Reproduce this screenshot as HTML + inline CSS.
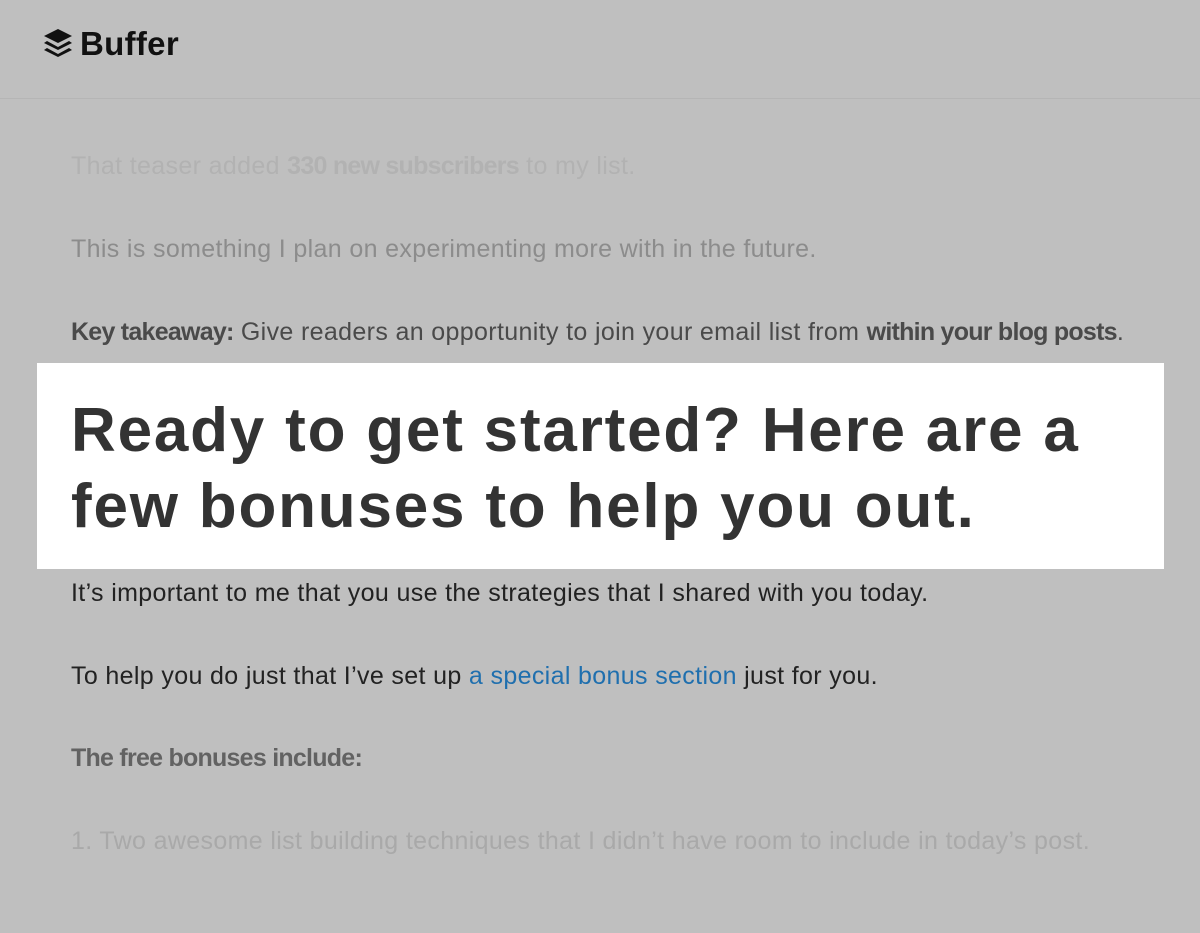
<!DOCTYPE html>
<html><head><meta charset="utf-8"><style>
html,body{margin:0;padding:0;}
body{width:1200px;height:933px;background:#bfbfbf;position:relative;overflow:hidden;font-family:"Liberation Sans",sans-serif;}
.hdr{position:absolute;left:0;top:0;width:1200px;height:98px;border-bottom:1px solid #b5b5b5;}
.logo{position:absolute;left:43px;top:28px;}
.brand{position:absolute;left:80px;top:25px;font-weight:bold;font-size:33px;color:#111;letter-spacing:0.3px;}
.l{position:absolute;left:71px;font-size:25px;line-height:30px;white-space:nowrap;letter-spacing:0.35px;}
.l b{letter-spacing:-0.75px;}
.box{position:absolute;left:37px;top:363px;width:1127px;height:206px;background:#fff;}
.h{position:absolute;left:34px;top:30px;font-weight:bold;font-size:62px;line-height:76px;color:#333;letter-spacing:1.8px;white-space:nowrap;}
a{color:#1f6fae;text-decoration:none;}
</style></head><body>
<div class="hdr">
<svg class="logo" width="30" height="34" viewBox="0 0 30 34">
<path d="M15 1 L29 8 L15 15 L1 8 Z" fill="#111"/>
<path d="M4 13 L15 19 L26 13 L29 15 L15 22 L1 15 Z" fill="#111"/>
<path d="M4 20 L15 26 L26 20 L29 22 L15 29 L1 22 Z" fill="#111"/>
</svg>
<div class="brand">Buffer</div>
</div>
<div class="l" style="top:151px;color:#b2b2b2;">That teaser added <b>330 new subscribers</b> to my list.</div>
<div class="l" style="top:234px;color:#8c8c8c;">This is something I plan on experimenting more with in the future.</div>
<div class="l" style="top:317px;color:#4a4a4a;"><b>Key takeaway:</b> Give readers an opportunity to join your email list from <b>within your blog posts</b>.</div>
<div class="box"><div class="h">Ready to get started? Here are a<br>few bonuses to help you out.</div></div>
<div class="l" style="top:578px;color:#222;">It’s important to me that you use the strategies that I shared with you today.</div>
<div class="l" style="top:661px;color:#222;">To help you do just that I’ve set up <a>a special bonus section</a> just for you.</div>
<div class="l" style="top:743px;color:#626262;"><b>The free bonuses include:</b></div>
<div class="l" style="top:826px;color:#a9a9a9;">1. Two awesome list building techniques that I didn’t have room to include in today’s post.</div>
</body></html>
